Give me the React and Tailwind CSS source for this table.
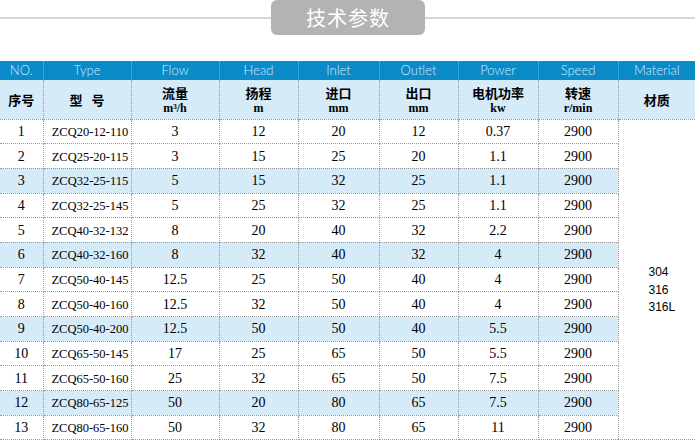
import React from "react";

const rows = [
  ["1", "ZCQ20-12-110", "3", "12", "20", "12", "0.37", "2900"],
  ["2", "ZCQ25-20-115", "3", "15", "25", "20", "1.1", "2900"],
  ["3", "ZCQ32-25-115", "5", "15", "32", "25", "1.1", "2900"],
  ["4", "ZCQ32-25-145", "5", "25", "32", "25", "1.1", "2900"],
  ["5", "ZCQ40-32-132", "8", "20", "40", "32", "2.2", "2900"],
  ["6", "ZCQ40-32-160", "8", "32", "40", "32", "4", "2900"],
  ["7", "ZCQ50-40-145", "12.5", "25", "50", "40", "4", "2900"],
  ["8", "ZCQ50-40-160", "12.5", "32", "50", "40", "4", "2900"],
  ["9", "ZCQ50-40-200", "12.5", "50", "50", "40", "5.5", "2900"],
  ["10", "ZCQ65-50-145", "17", "25", "65", "50", "5.5", "2900"],
  ["11", "ZCQ65-50-160", "25", "32", "65", "50", "7.5", "2900"],
  ["12", "ZCQ80-65-125", "50", "20", "80", "65", "7.5", "2900"],
  ["13", "ZCQ80-65-160", "50", "32", "80", "65", "11", "2900"],
];

const widths = ["w-[43px]", "w-[88px]", "w-[88px]", "w-[79px]", "w-[81px]", "w-[79px]", "w-[80px]", "w-[80px]", "w-[77px]"];
const english = ["NO.", "Type", "Flow", "Head", "Inlet", "Outlet", "Power", "Speed", "Material"];

// second header row: chinese label + unit
const labels = [
  ["流量", "m³/h"],
  ["扬程", "m"],
  ["进口", "mm"],
  ["出口", "mm"],
  ["电机功率", "kw"],
  ["转速", "r/min"],
];

const cjk = "font-['Noto_Sans_CJK_SC','Noto_Sans',sans-serif]";
const serif = "font-['Liberation_Serif','Noto_Sans_CJK_SC',serif]";
const line = "border-dotted border-[#9a9a9a]";

function App() {
  return (
    <div className="w-[695px] h-[446px] bg-white overflow-hidden">
      {/* title */}
      <div className="relative h-[61px]">
        <div className="absolute left-0 right-0 top-[17px] h-[2px] bg-[#d6d6d6]"></div>
        <div className={`relative ml-[271px] w-[154px] h-[35px] rounded-[6px] bg-[#b3b3b3] flex items-center justify-center text-white text-[20px] tracking-[1px] ${cjk}`}>
          技术参数
        </div>
      </div>

      <table className="w-[695px] border-collapse table-fixed">
        <colgroup>
          {widths.map((w, i) => (
            <col key={i} className={w} />
          ))}
        </colgroup>
        <thead>
          <tr className="h-[19px] bg-[#0b8ac8]">
            {english.map((t, i) => (
              <th
                key={i}
                className={`p-0 font-light text-[13px] leading-[19px] text-[#d3ecf9] font-['Lato','Open_Sans',sans-serif] ${i < 8 ? "border-r border-dotted border-[#6fb8df]" : ""}`}
              >
                {t}
              </th>
            ))}
          </tr>
          <tr className={`h-[39px] bg-[#d5ebf8] text-black border-b ${line}`}>
            <th className={`p-0 border-r ${line} text-[13px] font-bold ${cjk}`}>序号</th>
            <th className={`p-0 border-r ${line} text-[13px] font-bold ${cjk}`}>型&nbsp;&nbsp;&nbsp;号</th>
            {labels.map(([zh, unit], i) => (
              <th key={i} className={`p-0 border-r ${line}`}>
                <div className="flex flex-col items-center gap-[1px]">
                  <span className={`text-[13px] font-bold leading-[17px] ${cjk}`}>{zh}</span>
                  <span className={`text-[12px] font-bold leading-[13px] ${serif}`}>{unit}</span>
                </div>
              </th>
            ))}
            <th className={`p-0 text-[13px] font-bold ${cjk}`}>材质</th>
          </tr>
        </thead>
        <tbody>
          {rows.map((r, ri) => (
            <tr key={ri} className={`h-[24.7px] ${ri % 3 === 2 ? "bg-[#d5ebf8]" : ""}`}>
              {r.map((c, ci) => (
                <td
                  key={ci}
                  className={`p-0 pt-[1px] text-center leading-[16px] text-black border-r border-b ${line} ${serif} ${ci === 1 ? "text-[12.5px] pl-[6px]" : "text-[14px]"}`}
                >
                  {c}
                </td>
              ))}
              {ri === 0 && (
                <td rowSpan={13} className={`p-0 pt-[22px] bg-white border-b ${line} align-middle`}>
                  <div className="ml-[30px] text-[12px] leading-[17.5px] text-black font-['Liberation_Sans',Arial,sans-serif]">
                    <div>304</div>
                    <div>316</div>
                    <div>316L</div>
                  </div>
                </td>
              )}
            </tr>
          ))}
        </tbody>
      </table>
    </div>
  );
}

export default App;
